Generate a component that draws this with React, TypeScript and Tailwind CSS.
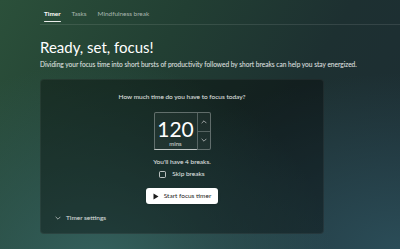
import React from "react";

const Chevron: React.FC<{ up?: boolean }> = ({ up }) => (
  <svg width="6" height="4" viewBox="0 0 6 4" fill="none">
    <path
      d={up ? "M0.6 3.2 L3 0.8 L5.4 3.2" : "M0.6 0.8 L3 3.2 L5.4 0.8"}
      stroke="rgba(255,255,255,0.8)"
      strokeWidth="0.7"
    />
  </svg>
);

const NumberBox: React.FC = () => (
  <div className="flex w-[57px] h-[38px] rounded-[2px] border border-white/30 bg-white/[0.03] mt-[10px]">
    <div className="relative flex flex-col items-center w-[43px] border-r border-white/25">
      <span className="text-[21px] leading-[20px] mt-[6px] text-white font-normal">120</span>
      <span className="text-[6px] leading-[8px] mt-[1px] text-white/80">mins</span>
      <div className="absolute bottom-[-1px] left-[-1px] right-0 h-[1.5px] bg-white/60 rounded" />
    </div>
    <div className="flex flex-col flex-1">
      <div className="flex-1 flex items-center justify-center border-b border-white/25">
        <Chevron up />
      </div>
      <div className="flex-1 flex items-center justify-center">
        <Chevron />
      </div>
    </div>
  </div>
);

export default function App() {
  const tabs = ["Timer", "Tasks", "Mindfulness break"];
  return (
    <div className="w-[400px] h-[249px] overflow-hidden text-white font-['Lato','Noto_Sans',sans-serif] bg-[radial-gradient(ellipse_at_25%_110%,#35625f_0%,transparent_55%),radial-gradient(ellipse_at_100%_100%,#2b4d58_0%,transparent_50%),linear-gradient(120deg,#2b503a_0%,#223f33_35%,#1d3031_65%,#1d2d34_100%)]">
      <div className="flex items-end h-[25px] ml-[40px] border-b border-white/10 gap-[11px] pl-[4px]">
        {tabs.map((t, idx) => (
          <div key={t} className="relative h-full flex items-center">
            <span
              className={`text-[6.4px] leading-[10px] mt-[3px] ${
                idx == 0 ? "text-white font-bold" : "text-white/60"
              }`}
            >
              {t}
            </span>
            {idx == 0 && (
              <div className="absolute bottom-[2px] left-0 right-0 h-[1.5px] rounded bg-white/90" />
            )}
          </div>
        ))}
      </div>

      <div className="pl-[40px]">
        <h1 className="text-[15px] leading-[20px] mt-[12px] font-normal">Ready, set, focus!</h1>
        <p className="text-[6.55px] leading-[10px] mt-[3px] text-white/90">
          Dividing your focus time into short bursts of productivity followed by short breaks can help you stay energized.
        </p>

        <div className="w-[284px] h-[155px] mt-[9px] rounded-[4px] bg-black/35 border border-white/5 flex flex-col items-center pt-[12px]">
          <span className="text-[6.5px] leading-[10px] text-white/90">How much time do you have to focus today?</span>
          <NumberBox />
          <span className="text-[6.5px] leading-[10px] mt-[7px] text-white/90">You'll have 4 breaks.</span>
          <label className="flex items-center gap-[6px] mt-[2px] h-[10px]">
            <span className="w-[7px] h-[7px] rounded-[1.5px] border border-white/70" />
            <span className="text-[6.5px] leading-[10px] text-white/90">Skip breaks</span>
          </label>
          <button className="mt-[9px] h-[16px] w-[72px] rounded-[3px] bg-white text-[#1b1b1b] flex items-center justify-center gap-[5px] shadow">
            <svg width="6" height="7" viewBox="0 0 6 7">
              <path d="M0.5 0.5 L5.5 3.5 L0.5 6.5 Z" fill="#1b1b1b" />
            </svg>
            <span className="text-[6.5px] leading-[10px]">Start focus timer</span>
          </button>
          <div className="self-start flex items-center gap-[5px] pl-[14px] mt-[9px] h-[10px]">
            <svg width="6" height="4" viewBox="0 0 6 4" fill="none">
              <path d="M0.6 0.8 L3 3.2 L5.4 0.8" stroke="rgba(255,255,255,0.8)" strokeWidth="0.7" />
            </svg>
            <span className="text-[6.5px] leading-[10px] text-white/85">Timer settings</span>
          </div>
        </div>
      </div>
    </div>
  );
}
